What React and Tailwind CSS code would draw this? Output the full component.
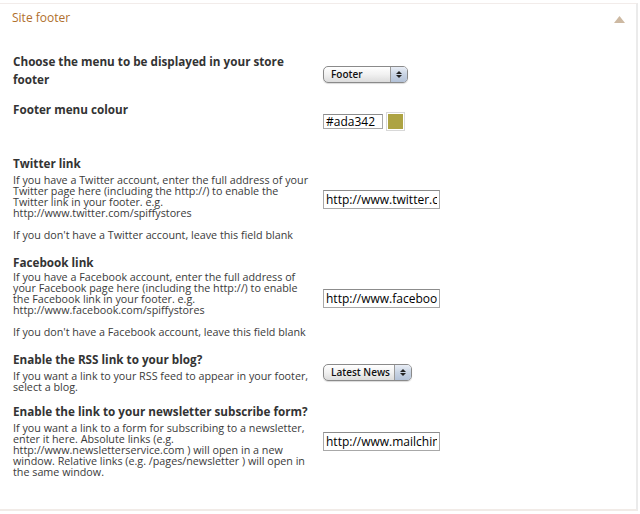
import React from "react";

const font = { fontFamily: '"Open Sans", "DejaVu Sans", sans-serif' };

function MacSelect({ label, width }) {
  return (
    <div
      className={`flex h-[17px] ${width} items-stretch overflow-hidden rounded-[5px] border border-[#8a8a8a] bg-gradient-to-b from-white via-[#f1f1f1] to-[#dcdcdc] shadow-[0_1px_1px_rgba(0,0,0,0.15)]`}
    >
      <span className="flex-1 whitespace-nowrap pl-[7px] text-[10px] font-semibold leading-[15px] text-[#111]">{label}</span>
      <span className="flex w-[17px] shrink-0 flex-col items-center justify-center gap-[1px] border-l border-[#9a9a9a] bg-gradient-to-b from-[#e9eef6] via-[#c8d3e3] to-[#b3c2d8]">
        <svg width="6" height="3" viewBox="0 0 6 3"><path d="M0 3 L3 0 L6 3 Z" fill="#222" /></svg>
        <svg width="6" height="3" viewBox="0 0 6 3"><path d="M0 0 L3 3 L6 0 Z" fill="#222" /></svg>
      </span>
    </div>
  );
}

function TextInput({ value, size = "h-[19px] w-[117px]" }) {
  return (
    <input
      readOnly
      value={value}
      style={font}
      className={`${size} border border-[#a8a8a8] border-t-[#8c8c8c] bg-white px-[2px] text-[12px] leading-[15px] text-black outline-none`}
    />
  );
}

function Row({ className = "", title, children, control, controlClass = "mt-[6px]", items = "items-center" }) {
  return (
    <div className={`flex ${items} ${className}`}>
      <div className="w-[310px] shrink-0 pl-[13px]">
        <div className="whitespace-nowrap text-[11.7px] font-bold leading-[18px] text-[#333]">{title}</div>
        {children}
      </div>
      <div className={`pl-[13px] ${controlClass}`}>{control}</div>
    </div>
  );
}

function Body({ lines, className = "" }) {
  return (
    <p className={`whitespace-nowrap text-[10.75px] leading-[11px] text-[#3a3a3a] ${className}`}>
      {lines.map((l, i) => (
        <React.Fragment key={i}>
          {l}
          {i < lines.length - 1 && <br />}
        </React.Fragment>
      ))}
    </p>
  );
}

export default function App() {
  return (
    <div className="h-[514px] w-[640px] bg-white pt-[3px]" style={font}>
      <div className="h-[508px] w-[638px] border-t border-r-2 border-b-2 border-t-[#f2ecea] border-r-[#ebebeb] border-b-[#f1ebe7]">
        <div className="flex items-center justify-between pt-[6px] pl-[12px] pr-[11px]">
          <span className="text-[12px] leading-[16px] text-[#b06f2d]">Site footer</span>
          <svg width="11" height="7" viewBox="0 0 11 7" className="mt-[2px]">
            <path d="M0 7 L5.5 0 L11 7 Z" fill="#cdb9a2" />
          </svg>
        </div>

        <Row
          className="mt-[26px]"
          title={<>Choose the menu to be displayed in your store<br />footer</>}
          control={<MacSelect label="Footer" width="w-[85px]" />}
          controlClass="mt-[8px]"
        />

        <Row
          className="mt-[12px]"
          items="items-start"
          title="Footer menu colour"
          controlClass="mt-[12px]"
          control={
            <div className="flex items-center gap-[3px]">
              <TextInput value="#ada342" size="h-[15px] w-[60px]" />
              <div className="flex h-[19px] w-[19px] items-center justify-center border border-[#d8d8d8] bg-white">
                <div className="h-[15px] w-[15px] bg-[#ada342]" />
              </div>
            </div>
          }
        />

        <Row
          className="mt-[23px]"
          title="Twitter link"
          control={<TextInput value="http://www.twitter.com/spiffystores" />}
          controlClass="mt-[0px]"
        >
          <Body
            className="mt-[3px]"
            lines={[
              "If you have a Twitter account, enter the full address of your",
              "Twitter page here (including the http://) to enable the",
              "Twitter link in your footer. e.g.",
              "http://www.twitter.com/spiffystores",
            ]}
          />
          <Body className="mt-[11px]" lines={["If you don't have a Twitter account, leave this field blank"]} />
        </Row>

        <Row
          className="mt-[12px]"
          title="Facebook link"
          control={<TextInput value="http://www.facebook.com/spiffystores" />}
          controlClass="mt-[2px]"
        >
          <Body
            className="mt-[1px]"
            lines={[
              "If you have a Facebook account, enter the full address of",
              "your Facebook page here (including the http://) to enable",
              "the Facebook link in your footer. e.g.",
              "http://www.facebook.com/spiffystores",
            ]}
          />
          <Body className="mt-[11px]" lines={["If you don't have a Facebook account, leave this field blank"]} />
        </Row>

        <Row
          className="mt-[12px]"
          title="Enable the RSS link to your blog?"
          control={<MacSelect label="Latest News" width="w-[89px]" />}
          controlClass="mt-[1px]"
        >
          <Body
            className="mt-[3px]"
            lines={["If you want a link to your RSS feed to appear in your footer,", "select a blog."]}
          />
        </Row>

        <Row
          className="mt-[9px]"
          title="Enable the link to your newsletter subscribe form?"
          control={<TextInput value="http://www.mailchimp.com/" />}
          controlClass="mt-[0px]"
        >
          <Body
            className="mt-[3px]"
            lines={[
              "If you want a link to a form for subscribing to a newsletter,",
              "enter it here. Absolute links (e.g.",
              "http://www.newsletterservice.com ) will open in a new",
              "window. Relative links (e.g. /pages/newsletter ) will open in",
              "the same window.",
            ]}
          />
        </Row>
      </div>
    </div>
  );
}
